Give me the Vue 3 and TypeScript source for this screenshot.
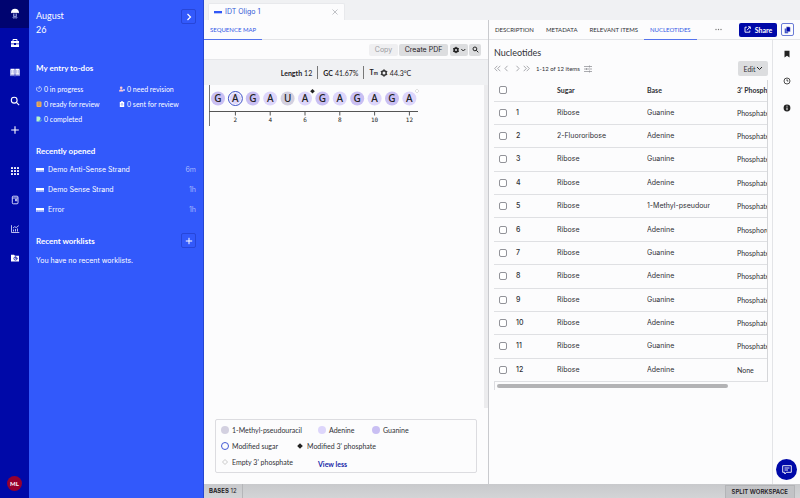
<script setup lang="ts">
import { ref } from 'vue'

interface Nucleotide {
  id: number
  sugar: string
  base: string
  phosphate: string
}

const bases = ['Guanine', 'Adenine', 'Guanine', 'Adenine', '1-Methyl-pseudouracil', 'Adenine', 'Guanine', 'Adenine', 'Guanine', 'Adenine', 'Guanine', 'Adenine']
const rows: Nucleotide[] = bases.map((base, i) => ({
  id: i + 1,
  sugar: i === 1 ? '2-Fluororibose' : 'Ribose',
  base,
  phosphate: i === 11 ? 'None' : i === 5 ? 'Phosphorothioate' : 'Phosphate',
}))

const letters = 'GAGAUAGAGAGA'.split('')
const fills: Record<string, string> = { G: '#c9bff3', A: '#ddd6fb', U: '#d3d0e0' }
const centre = (i: number): number => 9 + (i * 191.4) / 11
const ticks = [2, 4, 6, 8, 10, 12]

const recent = [
  { name: 'Demo Anti-Sense Strand', age: '6m' },
  { name: 'Demo Sense Strand', age: '1h' },
  { name: 'Error', age: '1h' },
]
const tabs = ['Description', 'Metadata', 'Relevant items', 'Nucleotides']
const active = ref('Nucleotides')
const selected = ref<number[]>([])
const toggleAll = (e: Event) => {
  selected.value = (e.target as HTMLInputElement).checked ? rows.map((r) => r.id) : []
}
</script>

<template>
  <div class="app">
    <nav class="rail" aria-label="Main">
      <button class="home" aria-label="Home">
        <svg width="10" height="12" viewBox="0 0 10 12"><path d="M1 4.800C1 2.200 2.700.8 5 .8s4 1.400 4 4c-.7.6-1.400.3-2-.3-.6.700-1.400.700-2 0-.6.7-1.400.7-2 0-.6.600-1.300.900-2 .3z" fill="#fff" /><path d="M3.600 5.500v3l-.7 1.500M6.400 5.500v3l.7 1.500M5 5.500v1.300M4.300 8h1.400v1.500l.5 1.300M4.300 8v1.500l-.5 1.300" fill="none" stroke="#b3bdf0" stroke-width=".8" /></svg>
      </button>
      <button aria-label="Projects">
        <svg width="10" height="10" viewBox="0 0 10 10"><path d="M3 3V1.500h4V3" fill="none" stroke="#fff" /><path d="M1 3h8v2.500H6V5H4v.5H1zM1 6.200h3V7h2v-.8h3V9H1z" fill="#fff" /></svg>
      </button>
      <button aria-label="Notebook">
        <svg width="10" height="10" viewBox="0 0 10 10"><path d="M.5 1.700h4.200v6H.5zM5.300 1.700h4.200v6H5.300z" fill="#fff" /><path d="M1.700 3v3.500M3.300 3v3.500M6.700 3v3.500M8.300 3v3.500" stroke="#8b94dd" stroke-width=".6" /><path d="M.3 3v5.600h3.900l.8.500.8-.5h3.900V3" fill="none" stroke="#dfe3fb" stroke-width=".6" /></svg>
      </button>
      <button aria-label="Search">
        <svg width="10" height="10" viewBox="0 0 10 10" fill="none" stroke="#fff" stroke-width="1.100"><circle cx="4.200" cy="4.200" r="2.900" /><path d="m6.400 6.400 2.800 2.800" /></svg>
      </button>
      <button aria-label="Create">
        <svg width="10" height="10" viewBox="0 0 10 10"><path d="M5 1.200v7.600M1.200 5h7.600" stroke="#fff" stroke-width="1.100" /></svg>
      </button>
      <button class="gap" aria-label="Apps">
        <svg width="10" height="10" viewBox="0 0 10 10" fill="#fff"><template v-for="y in 3" :key="y"><rect v-for="x in 3" :key="x" :x="x * 3 - 2" :y="y * 3 - 2" width="2" height="2" rx=".4" /></template></svg>
      </button>
      <button aria-label="Registry">
        <svg width="10" height="10" viewBox="0 0 10 10" fill="none" stroke="#e6e9ff" stroke-width=".9"><rect x="2.300" y="1.200" width="5.700" height="7.600" rx="1" /><path d="M2.300 3h5.700M5.500 4.300h1.300v1.500H5.500z" /></svg>
      </button>
      <button aria-label="Insights">
        <svg width="10" height="10" viewBox="0 0 10 10" fill="none" stroke="#e6e9ff" stroke-width=".8"><path d="M1.500 1.200v7.300h7.800M3.500 7.500V5.500M5.500 7.500V5M7.500 7.500V4.500M3 4l1.700-1.300L6.200 3.600l2.600-2" /></svg>
      </button>
      <button aria-label="Inventory">
        <svg width="10" height="10" viewBox="0 0 10 10"><path d="M1 1.800h3l1 1h4v5.700H1z" fill="#fff" /><circle cx="5.500" cy="5.500" r="1.600" fill="none" stroke="#0009a8" stroke-width=".8" /><path d="M5.500 3.500v2h2" fill="none" stroke="#0009a8" stroke-width=".6" /></svg>
      </button>
      <button class="avatar">ML</button>
    </nav>

    <aside class="panel">
      <header class="date">
        <p>August<br />26</p>
        <button class="square" aria-label="Expand"><svg width="8" height="10" viewBox="0 0 8 10"><path d="m2.500 2 3 3-3 3" fill="none" stroke="#fff" stroke-width="1.200" /></svg></button>
      </header>
      <h2>My entry to-dos</h2>
      <ul class="todos">
        <li><svg width="6" height="6" viewBox="0 0 6 6" fill="none" stroke="#d7defc" stroke-width=".8"><path d="M1.500 1a2.500 2.500 0 1 0 1.500-.5V3" /></svg>0 in progress</li>
        <li><svg width="6" height="6" viewBox="0 0 6 6"><circle cx="2.200" cy="1.700" r="1.300" fill="#ffc9d2" /><path d="M0 5.500c0-3 4.300-3 4.300 0z" fill="#ffc9d2" /><path d="M4 4h2M5 3v2" stroke="#fff" stroke-width=".7" /></svg>0 need revision</li>
        <li><svg width="6" height="6" viewBox="0 0 6 6"><rect x=".5" y=".5" width="5" height="5.500" rx="1" fill="#f2b25c" /><path d="M1.700 2h2.600M1.700 4h2.600" stroke="#8f6f63" stroke-width=".7" /></svg>0 ready for review</li>
        <li><svg width="6" height="6" viewBox="0 0 6 6"><path d="M.8 1H2V.2h2V1h1.200v5H.8z" fill="#fff" /><path d="M3 4.800V2.500M2 3.500l1-1 1 1" fill="none" stroke="#5b75e8" stroke-width=".6" /></svg>0 sent for review</li>
        <li><svg width="6" height="6" viewBox="0 0 6 6"><path d="M.5.500h2.800l1.200 1.300V3L3 5.500H.5z" fill="#b7f5c9" /><path d="m3 4.500 1 1 2-2" fill="none" stroke="#75e0aa" /></svg>0 completed</li>
      </ul>
      <h2>Recently opened</h2>
      <ul class="recent">
        <li v-for="item in recent" :key="item.name">
          <svg width="8" height="5" viewBox="0 0 8 5"><path d="M0 0h8v2H0z" fill="#fff" /><path d="M0 2h8v1.800H0z" fill="#9db0fc" /><path d="M.5 2v1.800M2.300 2v1.800M4.100 2v1.800M5.900 2v1.800M7.500 2v1.800" stroke="#c4cffc" stroke-width=".8" /></svg>
          <a href="#">{{ item.name }}</a><time>{{ item.age }}</time>
        </li>
      </ul>
      <div class="worklists">
        <h2>Recent worklists</h2>
        <button class="square" aria-label="New worklist"><svg width="8" height="8" viewBox="0 0 8 8"><path d="M4 .8v6.400M.8 4h6.400" stroke="#fff" /></svg></button>
      </div>
      <p class="none">You have no recent worklists.</p>
    </aside>

    <main class="workspace">
      <div class="files">
        <div class="file">
          <svg width="8" height="5" viewBox="0 0 8 5"><path d="M0 1h8v2H0z" fill="#3157f5" /><path d="M0 3.500h8" stroke="#b9c7fb" stroke-width="1" /></svg>
          <span>IDT Oligo 1</span>
          <button aria-label="Close"><svg width="6" height="6" viewBox="0 0 6 6"><path d="m.5.500 5 5m0-5-5 5" stroke="#b0b2b8" stroke-width=".8" /></svg></button>
        </div>
      </div>

      <div class="panes">
        <section class="map">
          <div class="tabs"><button class="on">SEQUENCE MAP</button></div>
          <div class="tools">
            <button class="copy" disabled>Copy</button>
            <button class="pdf">Create PDF</button>
            <div class="pair">
              <button aria-label="Settings"><svg width="14" height="8" viewBox="0 0 14 8"><circle cx="4" cy="4" r="1.900" fill="none" stroke="#222" stroke-width="1.600" /><path d="M4 .8v6.400M1.200 2.400l5.600 3.200M6.800 2.400 1.200 5.600" stroke="#222" stroke-width="1" /><circle cx="4" cy="4" r="1" fill="#dcdddf" /><path d="m9.300 3 2 2 2-2" fill="none" stroke="#222" /></svg></button>
              <button aria-label="Find"><svg width="7" height="7" viewBox="0 0 7 7" fill="none" stroke="#222"><circle cx="2.900" cy="2.900" r="1.900" /><path d="m4.300 4.300 2 2" /></svg></button>
            </div>
          </div>
          <dl class="facts">
            <div><dt>Length</dt><dd>12</dd></div>
            <div><dt>GC</dt><dd>41.67%</dd></div>
            <div><dt>T<small>m</small></dt><dd><svg width="8" height="8" viewBox="0 0 8 8"><circle cx="4" cy="4" r="2.200" fill="none" stroke="#333" stroke-width="1.400" /><path d="M4 .3v1.500M4 6.200v1.500M.8 2.200l1.400.8M7.200 2.200l-1.400.8M.8 5.800l1.400-.8M7.200 5.800l-1.400-.8" stroke="#333" stroke-width="1.200" /></svg>44.3°C</dd></div>
          </dl>
          <div class="canvas">
            <div class="drawing">
              <svg class="sequence" width="212" height="42" viewBox="0 0 212 42">
                <path d="M.5 0v41" stroke="#777" />
                <path d="M0 26.500h209" stroke="#555" />
                <g v-for="(l, i) in letters" :key="i">
                  <circle :cx="centre(i)" cy="13.500" :r="i === 1 ? 5.600 : 7" :fill="fills[l]" />
                  <circle v-if="i === 1" :cx="centre(i)" cy="13.500" r="7" fill="none" stroke="#3e50c9" />
                  <text class="letter" :x="centre(i)" y="17">{{ l }}</text>
                </g>
                <path d="m103.500 4 2.300 2.300-2.300 2.300-2.300-2.300z" fill="#222" />
                <path d="m208 4 2 2-2 2-2-2z" fill="#fff" stroke="#ccc" stroke-width=".6" />
                <g v-for="t in ticks" :key="t">
                  <path :d="`M${centre(t - 1)} 27v3.500`" stroke="#555" />
                  <text class="tick" :x="centre(t - 1)" y="37">{{ t }}</text>
                </g>
              </svg>
            </div>
            <div class="track"></div>
          </div>
          <div class="legend">
            <div>
              <span class="first"><i class="dot u"></i>1-Methyl-pseudouracil</span>
              <span class="second"><i class="dot a"></i>Adenine</span>
              <span><i class="dot g"></i>Guanine</span>
            </div>
            <div>
              <span class="sugar"><i class="ring"></i>Modified sugar</span>
              <span><svg width="8" height="8" viewBox="0 0 8 8"><path d="m4 1.200 2.800 2.800L4 6.800 1.200 4z" fill="#222" /></svg>Modified 3' phosphate</span>
            </div>
            <div>
              <span class="first"><svg width="8" height="8" viewBox="0 0 8 8"><path d="m4 1.500 2.500 2.500L4 6.500 1.500 4z" fill="none" stroke="#bbb" stroke-width=".8" /></svg>Empty 3' phosphate</span>
              <button class="less">View less</button>
            </div>
          </div>
        </section>

        <section class="details">
          <div class="tabs">
            <button v-for="t in tabs" :key="t" :class="{ on: active === t }" @click="active = t">{{ t.toUpperCase() }}</button>
            <button class="more" aria-label="More"><svg width="7" height="3" viewBox="0 0 7 3" fill="#777"><circle cx="1" cy="1.500" r=".7" /><circle cx="3.500" cy="1.500" r=".7" /><circle cx="6" cy="1.500" r=".7" /></svg></button>
            <span class="grow"></span>
            <button class="share"><svg width="7" height="7" viewBox="0 0 7 7" fill="none" stroke="#fff" stroke-width=".9"><path d="M2.800 1.200H1v5h4.800V4.500M3 4.200 6 1M4 .8h2.300V3" /></svg>Share</button>
            <button class="clip" aria-label="Copy link"><svg width="7" height="8" viewBox="0 0 7 8"><path d="M.7 2.500h3.500v4.800H.7z" fill="#3a50c4" /><path d="M2.300.8h3l1 1v4h-4z" fill="#0009a8" stroke="#fff" stroke-width=".4" /></svg></button>
          </div>
          <div class="split">
            <div class="content">
              <h1>Nucleotides</h1>
              <div class="pager">
                <button aria-label="First"><svg width="7" height="7" viewBox="0 0 7 7"><path d="M3.300.8.7 3.500l2.600 2.700M6.300.8 3.700 3.500l2.600 2.700" /></svg></button>
                <button aria-label="Previous"><svg width="7" height="7" viewBox="0 0 7 7"><path d="M4.500.8 2 3.500l2.500 2.700" /></svg></button>
                <button class="next" aria-label="Next"><svg width="7" height="7" viewBox="0 0 7 7"><path d="m2.500.8 2.500 2.700-2.500 2.700" /></svg></button>
                <button aria-label="Last"><svg width="7" height="7" viewBox="0 0 7 7"><path d="m.7.8 2.600 2.700L.7 6.200M3.700.8l2.600 2.700-2.600 2.700" /></svg></button>
                <span class="range">1-12 of 12 items</span>
                <button aria-label="Columns"><svg width="8" height="8" viewBox="0 0 8 8"><path d="M0 1.500h8M0 4h8M0 6.500h8M5.500.5v2M2.500 3v2M5.500 5.500v2" /></svg></button>
                <span class="grow"></span>
                <button class="edit">Edit<svg width="7" height="5" viewBox="0 0 7 5"><path d="m1 1 2.500 2.500L6 1" /></svg></button>
              </div>
              <div class="scroll">
                <table>
                  <colgroup><col class="c1" /><col class="c2" /><col class="c3" /><col class="c3" /><col class="c3" /></colgroup>
                  <thead>
                    <tr><th><input type="checkbox" aria-label="Select all" @change="toggleAll" /></th><th></th><th>Sugar</th><th>Base</th><th>3' Phosphate</th></tr>
                  </thead>
                  <tbody>
                    <tr v-for="r in rows" :key="r.id">
                      <td><input v-model="selected" type="checkbox" :value="r.id" :aria-label="`Select ${r.id}`" /></td>
                      <td class="num">{{ r.id }}</td>
                      <td><div>{{ r.sugar }}</div></td>
                      <td><div>{{ r.base }}</div></td>
                      <td class="phosphate">{{ r.phosphate }}</td>
                    </tr>
                  </tbody>
                </table>
              </div>
              <div class="hbar"><div></div></div>
            </div>
            <div class="side">
              <button aria-label="Bookmark"><svg width="8" height="8" viewBox="0 0 8 8"><path d="M1.500.8h5v6.700L4 5.700 1.500 7.500z" fill="#222" /></svg></button>
              <button aria-label="History"><svg width="8" height="8" viewBox="0 0 8 8" fill="none" stroke="#222" stroke-width=".8"><circle cx="4" cy="4" r="3" /><path d="M4 2.300V4h1.300" /></svg></button>
              <button aria-label="Information"><svg width="8" height="8" viewBox="0 0 8 8"><circle cx="4" cy="4" r="3.400" fill="#222" /><path d="M4 1.700v1M4 3.500v2.700" stroke="#fff" stroke-width="1" /></svg></button>
              <button class="chat" aria-label="Chat"><svg width="12" height="12" viewBox="0 0 12 12" fill="none" stroke="#fff" stroke-width=".9"><path d="M1.700 1.700h8.600v6.600H5.500L3.800 10V8.300H1.700zM3.500 4h5M3.500 6h3.500" /></svg></button>
            </div>
          </div>
        </section>
      </div>

      <footer class="status">
        <span class="count"><b>BASES</b> 12</span>
        <button>SPLIT WORKSPACE</button>
      </footer>
    </main>
  </div>
</template>

<style>
body { background: #fcfcfd; }
</style>

<style scoped>
.app { display: grid; grid-template-columns: 29px 175px minmax(0, 1fr); min-height: 100vh; font: 7px/10px Lato, "Liberation Sans", sans-serif; color: #303136; }
.app *, .app *::before { box-sizing: border-box; }
button { margin: 0; padding: 0; border: 0; background: none; font: inherit; color: inherit; display: flex; align-items: center; justify-content: center; cursor: pointer; }
h1, h2, p, ul, dl, dd { margin: 0; padding: 0; }
ul { list-style: none; }
svg { flex: none; display: block; }
.grow { flex: 1; }
.recent, .none, .file, .tools, td { font-family: Inter, "Liberation Sans", sans-serif; }

.rail { background: #0009a8; display: flex; flex-direction: column; align-items: center; }
.rail button { height: 29px; width: 29px; flex: none; }
.rail .home { height: 28px; background: #000470; }
.rail .gap { margin-top: 12px; }
.rail .avatar { width: 15px; height: 15px; border-radius: 50%; background: #95002f; color: #fff; font-weight: 700; font-size: 6px; margin: auto 0 7px; }

.panel { background: #3259fb; color: #fff; padding: 9px 7px 0; border-right: 1px solid #2545d0; }
.date { display: flex; justify-content: space-between; align-items: flex-start; font-size: 9px; line-height: 14px; height: 53px; }
.square { width: 15px; height: 15px; border: 1px solid #2746d8; border-radius: 2px; }
h2 { font-size: 8px; line-height: 12px; font-weight: 700; }
.todos { display: grid; grid-template-columns: 83px 1fr; grid-auto-rows: 15px; align-items: center; margin: 7px 0 19px; }
.todos li { display: flex; align-items: center; gap: 2px; white-space: nowrap; }
.recent { margin: 3px 0 13px; }
.recent li { display: flex; align-items: center; height: 20px; gap: 4px; }
.recent a { color: inherit; text-decoration: none; flex: 1; }
.recent time { color: #a8b8ff; }
.worklists { display: flex; justify-content: space-between; align-items: center; }
.none { margin-top: 8px; }

.workspace { display: flex; flex-direction: column; min-width: 0; }
.files { height: 20px; background: #f0f1f3; padding: 3px 4px 0; display: flex; }
.file { width: 137px; background: #fcfcfd; border-radius: 2px 2px 0 0; display: flex; align-items: center; gap: 3px; padding: 0 6px 0 5px; color: #3157d5; border: 1px solid #e8e9ec; border-bottom: 0; }
.file span { flex: 1; }
.panes { flex: 1; display: flex; min-height: 0; }
.map { flex: 284 1 0; min-width: 0; display: flex; flex-direction: column; border-right: 1px solid #c9cace; }
.details { flex: 311 1 0; min-width: 0; display: flex; flex-direction: column; }
.tabs { height: 20px; flex: none; display: flex; align-items: center; border-bottom: 1px solid #e3e4e7; font-size: 6px; }
.tabs .on { color: #3157e5; box-shadow: inset 0 -1px #5573ec; }
.tabs button { padding: 0 6px; height: 20px; }
.tabs .more { margin-left: 12px; }
.tabs .share { height: 14px; border-radius: 2px; background: #0009a8; color: #fff; font-size: 7px; font-weight: 700; gap: 4px; width: 38px; padding: 0; margin-right: 4px; }
.tabs .clip { height: 13px; width: 13px; padding: 0; border: 1px solid #6a7bd6; border-radius: 2px; margin-right: 6px; }

.tools { height: 19px; display: flex; align-items: center; justify-content: flex-end; gap: 1px; padding-right: 7px; }
.tools button { height: 12px; background: #dcdddf; border-radius: 2px; }
.tools .copy { width: 29px; background: #efeff1; color: #9a9ba0; }
.tools .pdf { width: 49px; color: #1f2024; }
.pair { display: flex; gap: 1px; margin-left: 1px; }
.pair button:first-child { width: 18px; }
.pair button:last-child { width: 12px; }
.facts { height: 26px; background: #f0f1f3; border-top: 1px solid #e6e7ea; display: flex; align-items: center; justify-content: center; color: #1f2024; }
.facts div { display: flex; align-items: center; gap: 2px; padding: 0 5px; height: 13px; border-left: 1px solid #777; }
.facts div:first-child { border: 0; }
.facts dt { font-weight: 700; }
.facts small { font-size: 5px; }
.facts dd { display: flex; align-items: center; gap: 2px; }
.canvas { display: flex; flex: 1; max-height: 323px; }
.drawing { flex: 1; padding-left: 5px; }
.track { width: 4px; background: #ececee; }
.letter { font: 500 10px "Noto Sans", sans-serif; text-anchor: middle; fill: #222; }
.tick { font: 6px "DejaVu Sans Mono", monospace; text-anchor: middle; fill: #222; }
.legend { margin: 11px 11px; padding: 2px 5px; border: 1px solid #dcdce0; border-radius: 2px; }
.legend div { display: flex; align-items: center; height: 16px; }
.legend span { display: flex; align-items: center; gap: 3px; white-space: nowrap; }
.legend .first { width: 97px; }
.legend .second { width: 54px; }
.legend .sugar { width: 75px; }
.dot { width: 8px; height: 8px; border-radius: 50%; }
.u { background: #d3d0e0; }
.a { background: #ddd6fb; }
.g { background: #c9bff3; }
.ring { width: 8px; height: 8px; border: 1px solid #4459d4; border-radius: 50%; }
.less { color: #1526a8; font-weight: 700; padding-top: 3px; }

.split { flex: 1; display: flex; min-height: 0; }
.content { flex: 1; min-width: 0; padding: 6px 4px 0 5px; }
h1 { font-size: 9px; line-height: 13px; font-weight: 400; }
.pager { display: flex; align-items: center; height: 15px; margin: 2px 0 4px; }
.pager svg { fill: none; stroke: #94959b; stroke-width: 0.8px; }
.pager button { margin-right: 2px; }
.pager .next { margin-left: 2px; }
.pager .range { margin: 0 4px; font-size: 6px; }
.pager .edit { width: 30px; height: 15px; margin: 0; background: #dcdddf; border-radius: 2px; font-size: 7px; }
.pager .edit svg { stroke: #222; stroke-width: 1px; }
.scroll { overflow-x: auto; scrollbar-width: none; border-right: 1px solid #d5d6d9; }
table { width: 333px; height: 302px; table-layout: fixed; border-collapse: collapse; }
thead tr { height: 21px; }
.c1 { width: 22px; }
.c2 { width: 41px; }
.c3 { width: 90px; }
th, td { padding: 0; text-align: left; border-bottom: 1px solid #dfe0e3; vertical-align: middle; white-space: nowrap; }
th { font-weight: 700; }
td div { width: 63px; overflow: hidden; }
.num { font-weight: 500; }
.phosphate { font-family: Lato, "Liberation Sans", sans-serif; }
input { appearance: none; display: block; width: 8px; height: 8px; margin: 0 0 0 5px; border: 1px solid #929399; border-radius: 2px; background: #fff; }
input:checked { background: #3157f5; }
.hbar { padding: 2px; border-left: 1px solid #dcdce0; }
.hbar div { width: 86%; height: 4px; border-radius: 2px; background: #b3b3b5; }
.side { width: 28px; border-left: 1px solid #e3e4e7; display: flex; flex-direction: column; align-items: center; }
.side button { height: 27px; }
.side .chat { width: 21px; height: 21px; border-radius: 50%; background: #0009a8; margin-top: auto; margin-bottom: 4px; }

.status { height: 14px; background: linear-gradient(#c8c9cc, #d3d4d6); display: flex; justify-content: space-between; color: #1f2024; font: 6px/10px Inter, "Liberation Sans", sans-serif; }
.count { padding: 2px 5px; border-right: 1px solid #b5b6b9; }
.status button { font-weight: 600; padding: 0 6px; margin: 1px 5px 0 0; background: #c2c3c6; border: 1px solid #b3b4b7; border-bottom: 0; }
</style>
